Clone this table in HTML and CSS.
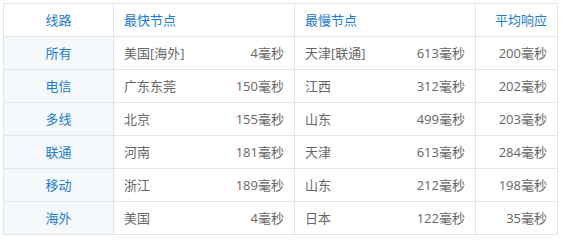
FILE: index.html
```html
<!DOCTYPE html>
<html lang="zh-CN">
<head>
<meta charset="utf-8">
<title>线路节点</title>
<link rel="stylesheet" href="styles.css">
</head>
<body>
<div class="wrap">
<table class="speed">
  <colgroup>
    <col class="c-line"><col class="c-node"><col class="c-node"><col class="c-avg">
  </colgroup>
  <thead>
    <tr>
      <th class="line">线路</th>
      <th class="left">最快节点</th>
      <th class="left">最慢节点</th>
      <th class="right">平均响应</th>
    </tr>
  </thead>
  <tbody>
    <tr><td class="line">所有</td><td><div class="pair"><span>美国[海外]</span><span>4毫秒</span></div></td><td><div class="pair"><span>天津[联通]</span><span>613毫秒</span></div></td><td class="right">200毫秒</td></tr>
    <tr><td class="line">电信</td><td><div class="pair"><span>广东东莞</span><span>150毫秒</span></div></td><td><div class="pair"><span>江西</span><span>312毫秒</span></div></td><td class="right">202毫秒</td></tr>
    <tr><td class="line">多线</td><td><div class="pair"><span>北京</span><span>155毫秒</span></div></td><td><div class="pair"><span>山东</span><span>499毫秒</span></div></td><td class="right">203毫秒</td></tr>
    <tr><td class="line">联通</td><td><div class="pair"><span>河南</span><span>181毫秒</span></div></td><td><div class="pair"><span>天津</span><span>613毫秒</span></div></td><td class="right">284毫秒</td></tr>
    <tr><td class="line">移动</td><td><div class="pair"><span>浙江</span><span>189毫秒</span></div></td><td><div class="pair"><span>山东</span><span>212毫秒</span></div></td><td class="right">198毫秒</td></tr>
    <tr><td class="line">海外</td><td><div class="pair"><span>美国</span><span>4毫秒</span></div></td><td><div class="pair"><span>日本</span><span>122毫秒</span></div></td><td class="right">35毫秒</td></tr>
  </tbody>
</table>
</div>
</body>
</html>
```
FILE: styles.css
```css
html, body {
  margin: 0;
  padding: 0;
  background: #ffffff;
}
.wrap {
  padding: 3px;
}
.speed {
  border-collapse: collapse;
  table-layout: fixed;
  width: 554px;
  font-family: "Open Sans", "Noto Sans CJK SC", sans-serif;
  font-size: 13px;
  color: #666666;
}
.c-line { width: 110px; }
.c-node { width: 181px; }
.c-avg { width: 82px; }
.speed th,
.speed td {
  border: 1px solid #e5e5e5;
  height: 32px;
  padding: 0 10px;
  box-sizing: border-box;
  font-weight: normal;
  line-height: 18px;
  white-space: nowrap;
}
.speed tr { height: 33px; }
.speed th {
  color: #1a7bd0;
  background: #ffffff;
}
.speed th.left { text-align: left; }
.speed .right { text-align: right; }
.speed .line { text-align: center; }
.speed td.line {
  color: #1a7bd0;
  background: #f5f9fc;
}
.pair {
  display: flex;
  justify-content: space-between;
}
```
